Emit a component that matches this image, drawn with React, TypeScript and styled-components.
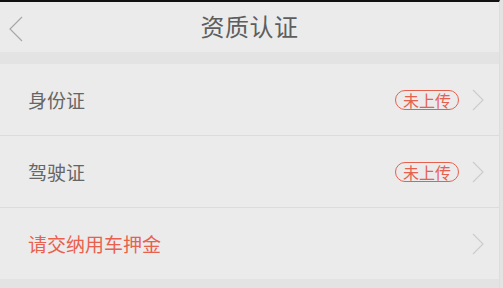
import React from "react";
import styled, { createGlobalStyle } from "styled-components";

const Global = createGlobalStyle`
  html, body { margin: 0; padding: 0; background: #e3e3e3; }
  body { font-family: "Noto Sans CJK SC", "Noto Sans", sans-serif; }
`;

const Page = styled.div`
  width: 500px;
  height: 288px;
  background: #e3e3e3;
  border-top: 2px solid #111;
  border-right: 1px solid #dddddd;
  box-sizing: border-box;
  display: flex;
  flex-direction: column;
  overflow: hidden;
`;

const Header = styled.div`
  height: 50px;
  background: #ebebeb;
  display: flex;
  align-items: center;
  justify-content: center;
  position: relative;
  flex-shrink: 0;
`;

const Back = styled.svg`
  position: absolute;
  left: 8px;
  top: 14px;
`;

const Title = styled.div`
  font-size: 24px;
  color: #5e5e5e;
  letter-spacing: 0.5px;
  line-height: 1;
  margin-top: -2px;
`;

const List = styled.div`
  margin-top: 12px;
  background: #ebebeb;
  display: flex;
  flex-direction: column;
`;

const Row = styled.div<{ $last?: boolean }>`
  height: 71px;
  display: flex;
  align-items: center;
  padding: 0 15px 0 28px;
  border-bottom: ${(p) => (p.$last ? "none" : "1px solid #dcdcdc")};
`;

const Label = styled.div<{ $accent?: boolean }>`
  flex: 1;
  font-size: 19px;
  color: ${(p) => (p.$accent ? "#e9604d" : "#666")};
  line-height: 1;
`;

const Badge = styled.div`
  border: 1.5px solid #e6604e;
  color: #e6604e;
  border-radius: 11px;
  font-size: 16px;
  line-height: 16px;
  padding: 0 7px;
  height: 18px;
  box-sizing: border-box;
  height: 20px;
  display: flex;
  align-items: center;
  margin-right: 13px;
`;

const Chevron = () => (
  <svg width="12" height="22" viewBox="0 0 12 22">
    <polyline points="1,1 11,11 1,21" fill="none" stroke="#cccccc" strokeWidth="1.2" />
  </svg>
);

const rows = [
  { label: "身份证", badge: "未上传" },
  { label: "驾驶证", badge: "未上传" },
  { label: "请交纳用车押金", accent: true },
];

export default function App() {
  return (
    <>
      <Global />
      <Page>
        <Header>
          <Back width="16" height="26" viewBox="0 0 16 26">
            <polyline points="14,1 2,13 14,25" fill="none" stroke="#a8a8a8" strokeWidth="1.2" />
          </Back>
          <Title>资质认证</Title>
        </Header>
        <List>
          {rows.map((r, i) => (
            <Row key={r.label} $last={i === rows.length - 1}>
              <Label $accent={r.accent}>{r.label}</Label>
              {r.badge && <Badge>{r.badge}</Badge>}
              <Chevron />
            </Row>
          ))}
        </List>
      </Page>
    </>
  );
}
